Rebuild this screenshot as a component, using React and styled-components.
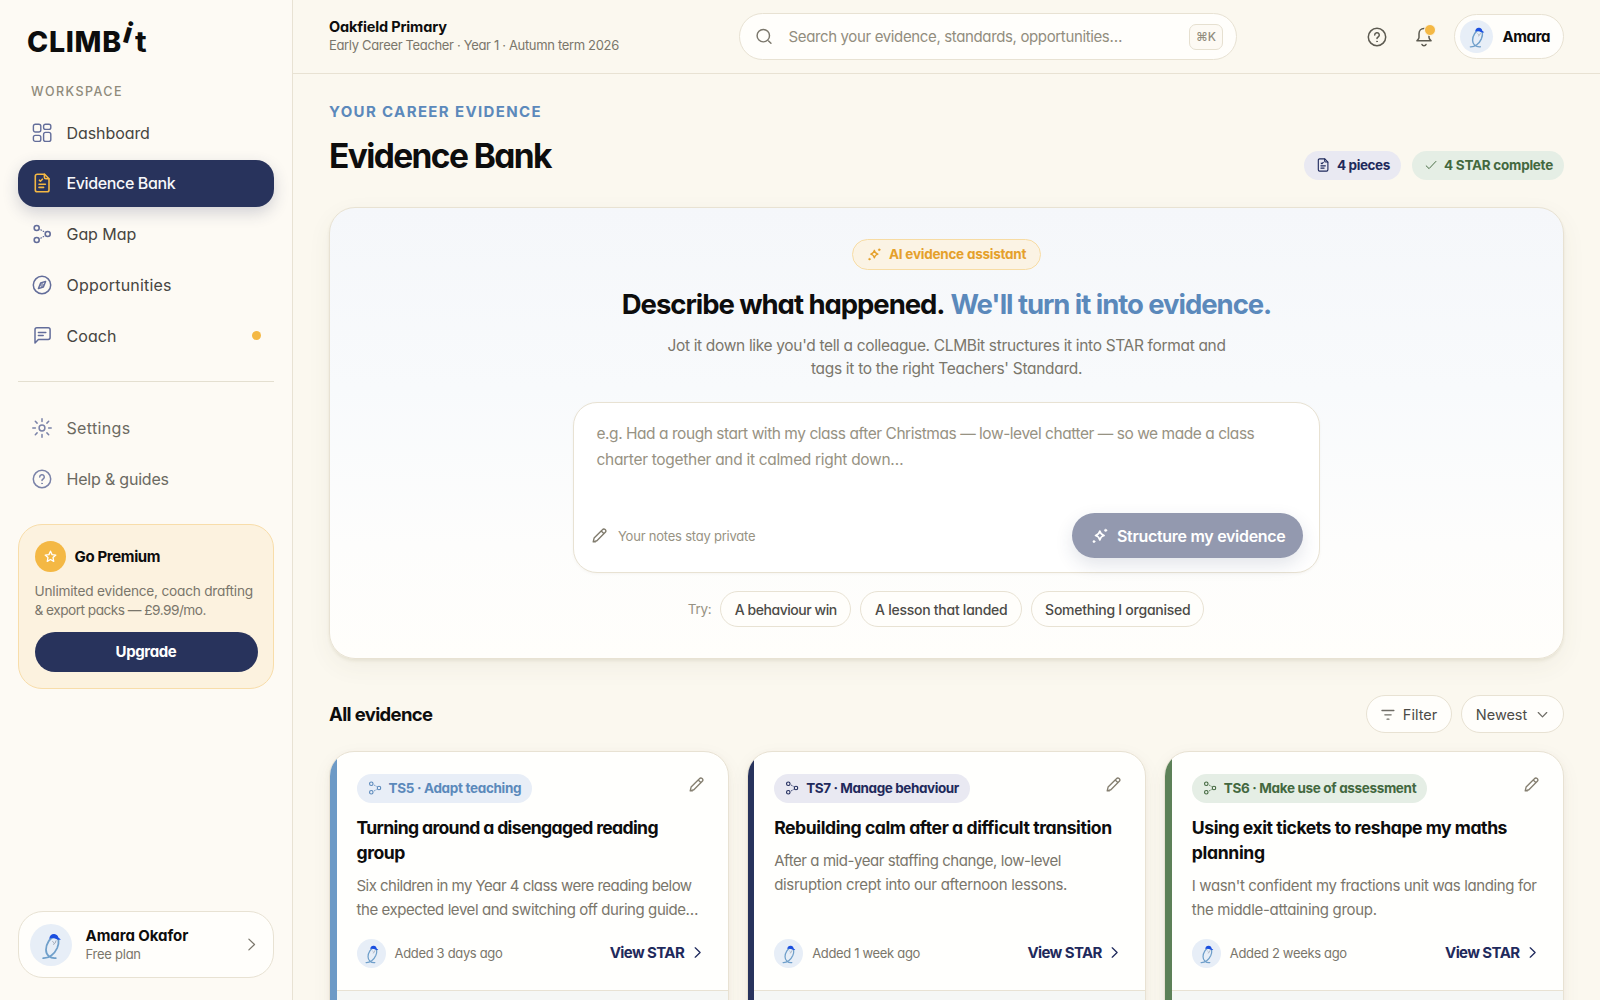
import React from "react";
import styled, { createGlobalStyle } from "styled-components";

const c = {
  navy: "#28335c",
  navyText: "#1f2a5c",
  blue: "#5b89bb",
  amber: "#f4b844",
  line: "#e8e2d3",
  ink: "#0d0d0d",
  body: "#7a766b",
  faint: "#979283",
  paper: "#fffefb",
};

const Global = createGlobalStyle`
  *, *::before, *::after { box-sizing: border-box; }
  body {
    margin: 0;
    background: #fbf8ef;
    color: ${c.ink};
    font-family: Inter, "Liberation Sans", sans-serif;
    font-feature-settings: "cv11";
    overflow: hidden;
  }
  button { font: inherit; color: inherit; border: 0; background: none; padding: 0; }
`;

/* Shared text primitive: size, weight, colour, tracking */
const Text = styled.span`
  display: ${(p) => (p.$block ? "block" : "inline-block")};
  white-space: pre;
  font-size: ${(p) => p.$size}px;
  font-weight: ${(p) => p.$w || 400};
  letter-spacing: ${(p) => p.$ls || 0}px;
  line-height: ${(p) => (p.$lh ? `${p.$lh}px` : "normal")};
  color: ${(p) => p.$color || "inherit"};
`;

/* ---------- icons ---------- */
const Icon = styled.svg`
  display: block;
  flex: none;
  fill: none;
  stroke: currentColor;
  stroke-linecap: round;
  stroke-linejoin: round;
`;
const Svg = ({ size = 20, sw = 1.4, children }) => (
  <Icon width={size} height={size} viewBox="0 0 20 20" strokeWidth={sw}>{children}</Icon>
);
const GridIcon = () => (
  <Svg sw={1.4}>
    <rect x="1.4" y="1.2" width="7.4" height="7.8" rx="2" />
    <rect x="11.6" y="1.2" width="7.2" height="5.2" rx="1.9" />
    <rect x="1.4" y="12.4" width="7.4" height="6" rx="1.9" />
    <rect x="11.6" y="9.4" width="7.2" height="9" rx="2" />
  </Svg>
);
const DocIcon = ({ size, sw = 1.6 }) => (
  <Svg size={size} sw={sw}>
    <path d="M12.6 1.2H5.2A1.9 1.9 0 0 0 3.3 3.1v13.8a1.9 1.9 0 0 0 1.9 1.9h9.9a1.9 1.9 0 0 0 1.9-1.9V5.8z" />
    <path d="M12.4 1.4v2.9a1.5 1.5 0 0 0 1.5 1.5h2.9" />
    <path d="M7.4 7.2l1 1 2-2M7 11.2h6.4M7 14.4h4.6" />
  </Svg>
);
const MapIcon = ({ size, sw = 1.6 }) => (
  <Svg size={size} sw={sw}>
    <circle cx="4.7" cy="4" r="2.5" />
    <circle cx="4.7" cy="16" r="2.5" />
    <circle cx="15.7" cy="10" r="2.5" />
    <path strokeWidth="1.2" strokeDasharray="0.6 2" d="M8.9 5.9l4 2.2M8.9 14.1l4-2.2" />
  </Svg>
);
const CompassIcon = () => (
  <Svg sw={1.5}>
    <circle cx="10" cy="10" r="8.7" />
    <path d="M13.6 6.4l-5 1.6-2.2 5.6 5-1.6z" strokeWidth="1.4" />
    <circle cx="10" cy="10" r="1.3" strokeWidth="1.1" />
  </Svg>
);
const ChatIcon = () => (
  <Svg sw={1.5}>
    <path d="M3 17V3.7A1.9 1.9 0 0 1 4.9 1.8h11.3a1.9 1.9 0 0 1 1.9 1.9v7.8a1.9 1.9 0 0 1-1.9 1.9H6.4z" />
    <path d="M6.4 6.4h7.4M6.4 9.4h4.8" />
  </Svg>
);
const GearIcon = () => (
  <Svg sw={1.5}>
    <circle cx="10" cy="10" r="2.9" />
    <path d="M10 .8v2.6M10 16.6v2.6M.8 10h2.6M16.6 10h2.6M3.3 3.3l1.8 1.8M14.9 14.9l1.8 1.8M16.7 3.3l-1.8 1.8M5.1 14.9l-1.8 1.8" />
  </Svg>
);
const HelpIcon = ({ size, sw = 1.5 }) => (
  <Svg size={size} sw={sw}>
    <circle cx="10" cy="10" r="8.7" />
    <path d="M7.7 8a2.3 2.3 0 1 1 3.4 2c-.8.4-1.1.8-1.1 1.6" />
    <circle cx="10" cy="14.4" r=".5" fill="currentColor" strokeWidth=".7" />
  </Svg>
);
const StarIcon = () => (
  <Svg size={13} sw={2}>
    <path d="M10 1.8l2.4 5.3 5.8.7-4.3 3.9 1.1 5.8-5-2.9-5 2.9 1.1-5.8L1.8 7.8l5.8-.7z" />
  </Svg>
);
const SparkIcon = ({ size = 16, sw = 1.8 }) => (
  <Svg size={size} sw={sw}>
    <path d="M9.8 4.4c.7 3 1.8 4.3 4.8 5-3 .7-4.1 2-4.8 5-.7-3-1.8-4.3-4.8-5 3-.7 4.1-2 4.8-5z" />
    <circle cx="16.3" cy="3.7" r="1.3" fill="currentColor" strokeWidth=".6" />
    <circle cx="3.3" cy="16.2" r="1.2" fill="currentColor" strokeWidth=".6" />
  </Svg>
);
const PencilIcon = () => (
  <Svg size={15} sw={1.8}>
    <path d="M1.6 18.4l1.2-5L13.9 2.3a2.5 2.5 0 0 1 3.8 3.5L6.5 17z M1.6 18.4h3M12.6 4.2l3.2 3.2" />
  </Svg>
);
const SearchIcon = () => (
  <Svg size={17} sw={1.7}>
    <circle cx="8.6" cy="9" r="7.3" />
    <path d="M14.8 15.2l2.8 2.8" />
  </Svg>
);
const BellIcon = () => (
  <Svg sw={1.5}>
    <path d="M10 1.6c-3 0-5 2.3-5 5.2v3.6c0 1.3-.9 2.1-2.1 3.3h14.2c-1.2-1.2-2.1-2-2.1-3.3V6.8c0-2.9-2-5.2-5-5.2z" />
    <path d="M8 17.4c.3.9 1 1.3 2 1.3s1.7-.4 2-1.3" />
  </Svg>
);
const CheckIcon = () => (
  <Svg size={12} sw={1.6}><path d="M2 11.5l4.8 4.5L18.2 4" /></Svg>
);
const Chevron = ({ down, size = 14, sw = 1.9 }) => (
  <Svg size={size} sw={sw}><path d={down ? "M3.5 7l6.5 6.6L16.5 7" : "M6.5 2.8L14 10l-7.5 7.2"} /></Svg>
);
const FilterIcon = () => (
  <Svg size={14} sw={1.9}><path d="M1.4 5h17M5.5 11.2h9M8.7 17.4h2.6" /></Svg>
);

const Disc = styled.span`
  display: grid;
  place-items: center;
  flex: none;
  width: ${(p) => p.$d}px;
  height: ${(p) => p.$d}px;
  border-radius: 50%;
  background: ${(p) => p.$bg || "#e7eef7"};
  color: #fff;
`;
const Avatar = ({ d }) => (
  <Disc $d={d}>
    <svg width={d} height={d} viewBox="0 0 42 42" fill="none" strokeLinecap="round">
      <path d="M13.2 34.2c5.6.3 11.4-4.2 14-10.2 2.3-6 1.9-10.600-2.200-11-5-.2-9 7.200-9 12.800 0 5.200 4 8.900 9.800 8.300" stroke="#6f9fca" strokeWidth="1.8" />
      <path d="M22.6 17.5l1 .9M26 16.8l-.8 2M23.4 20.3l1.2-.7" stroke="#8b96a5" strokeWidth=".8" />
      <path d="M19.3 14.7c.2-3.4 2.3-5 5-4.8 2.4.2 3.8 1.7 4 3.7l2.6 1.9c-2.2.6-3.7.2-5.2-.7-2-1-4.2-1-6.4-.1z" fill="#1b4fe0" />
    </svg>
  </Disc>
);

/* ---------- shell ---------- */
const Shell = styled.div`
  display: grid;
  grid-template-columns: 293px 1fr;
  width: 1600px;
  height: 1000px;
  overflow: hidden;
`;
const Sidebar = styled.aside`
  display: flex;
  flex-direction: column;
  height: 1000px;
  padding: 0 18px 22px;
  background: #fdfaf4;
  border-right: 1px solid ${c.line};
`;
const Logo = styled.div`
  display: flex;
  align-items: baseline;
  height: 83px;
  padding: 25px 0 0 9px;
  font-size: 28.5px;
  font-weight: 800;
  line-height: 34px;
  letter-spacing: 0.7px;
`;
const LogoTilt = styled.span`
  position: relative;
  top: -9px;
  margin: 0 2px 0 2px;
  transform: rotate(16deg);
`;
const LogoEnd = styled.span`
  display: inline-block;
  font-weight: 750;
  transform: scaleX(1.12);
  transform-origin: 0 50%;
`;
const GroupLabel = styled.div`
  flex: none;
  height: 26px;
  padding: 0 13px;
  display: flex;
`;
const Nav = styled.nav`
  display: flex;
  flex-direction: column;
  gap: 4px;
`;
const NavItem = styled.a`
  display: flex;
  align-items: center;
  gap: 14.5px;
  height: 47px;
  padding: 0 13px ${(p) => (p.$first ? 0 : 2)}px 14px;
  border-radius: 18px;
  color: ${(p) => (p.$on ? "#f7f7fa" : p.$soft ? "#6b6961" : "#464541")};
  background: ${(p) => (p.$on ? c.navy : "transparent")};
  box-shadow: ${(p) => (p.$on ? "0 6px 16px rgba(40,51,92,.2)" : "none")};
  & > svg { color: ${(p) => (p.$on ? c.amber : p.$soft ? "#7a82a8" : "#636d9a")}; }
`;
const Dot = styled.i`
  width: 9px;
  height: 9px;
  margin-left: auto;
  border-radius: 50%;
  background: ${c.amber};
`;
const Rule = styled.hr`
  width: 100%;
  height: 1px;
  border: 0;
  margin: 21px 0 22px;
  background: #e4dfd0;
`;
const Premium = styled.section`
  display: flex;
  flex-direction: column;
  height: 165px;
  margin-top: 22px;
  padding: 16px 15.5px;
  border: 1px solid #f8ddaa;
  border-radius: 24px;
  background: #fcf2df;
`;
const PremiumHead = styled.div`
  display: flex;
  align-items: center;
  gap: 9px;
  height: 31px;
  margin-bottom: 9.5px;
`;
const Upgrade = styled.button`
  height: 40px;
  margin-top: auto;
  padding-bottom: 2px;
  border-radius: 20px;
  background: ${c.navy};
  color: #fff;
`;
const UserCard = styled.section`
  display: flex;
  align-items: center;
  height: 67px;
  margin-top: auto;
  padding: 0 14px 0 11px;
  border: 1px solid ${c.line};
  border-radius: 25px;
  background: ${c.paper};
  & > svg { margin-left: auto; color: #7b776c; }
`;
const Names = styled.div`
  display: flex;
  flex-direction: column;
  margin-left: 13.5px;
`;

const Main = styled.main`
  display: flex;
  flex-direction: column;
  min-width: 0;
`;
const TopBar = styled.header`
  display: flex;
  flex: none;
  align-items: center;
  height: 74px;
  padding: 0 36px;
  border-bottom: 1px solid ${c.line};
`;
const School = styled.div`
  width: 410px;
  padding-bottom: 1px;
`;
const Search = styled.div`
  display: flex;
  align-items: center;
  gap: 15.5px;
  width: 498px;
  height: 47px;
  padding: 0 13px 0 16px;
  border: 1px solid ${c.line};
  border-radius: 24px;
  background: ${c.paper};
  color: #7b776c;
`;
const Key = styled.kbd`
  display: grid;
  place-items: center;
  width: 34px;
  height: 26px;
  margin-left: auto;
  border: 1px solid #e6e0d0;
  border-radius: 7px;
  background: #fdfaf4;
  font-family: inherit;
`;
const Actions = styled.div`
  display: flex;
  align-items: center;
  margin-left: auto;
  color: #5c5a50;
`;
const BellButton = styled.button`
  position: relative;
  margin: 0 20px 0 27px;
  color: #5c5a50;
`;
const Badge = styled.i`
  position: absolute;
  top: -3px;
  right: -1.5px;
  width: 12px;
  height: 12px;
  border: 1.5px solid #fbf8ef;
  border-radius: 50%;
  background: ${c.amber};
`;
const Profile = styled.div`
  display: flex;
  align-items: center;
  gap: 9.5px;
  width: 110px;
  height: 45px;
  padding-left: 5px;
  border: 1px solid ${c.line};
  border-radius: 23px;
  background: ${c.paper};
`;

const Page = styled.div`
  padding: 28px 36px 0;
`;
const PageHead = styled.div`
  display: flex;
  justify-content: space-between;
  align-items: flex-end;
  height: 78px;
`;
const Titles = styled.div`
  align-self: flex-start;
`;
const H1 = styled.h1`
  margin: 15px 0 0;
`;
const Tags = styled.div`
  display: flex;
  gap: 11px;
`;
const Tag = styled.span`
  display: inline-flex;
  align-items: center;
  gap: 7px;
  width: ${(p) => p.$width}px;
  height: 29px;
  padding: 0 0 1px ${(p) => p.$pl || 12}px;
  border-radius: 15px;
  color: ${(p) => p.$fg};
  background: ${(p) => p.$bg};
`;

const Hero = styled.section`
  display: flex;
  flex-direction: column;
  align-items: center;
  height: 452px;
  margin-top: 27px;
  padding-top: 31px;
  border: 1px solid ${c.line};
  border-radius: 26px;
  background: linear-gradient(180deg, #f5f7fa 0%, #f8fafc 40%, #fdfdfc 75%, #fffefb 100%);
  box-shadow: 0 2px 3px rgba(120,105,60,.1), 0 8px 24px rgba(90,80,50,.06);
`;
const AiBadge = styled.span`
  display: flex;
  align-items: center;
  gap: 7px;
  width: 189px;
  height: 31px;
  padding: 0 0 1px 14px;
  border: 1px solid #f7dca4;
  border-radius: 16px;
  background: #fbf3e4;
  color: #e5a02b;
`;
const H2 = styled.h2`
  display: flex;
  gap: 6px;
  margin: 16px 0 12px;
`;
const Lead = styled.div`
  display: flex;
  flex-direction: column;
  align-items: center;
`;
const Composer = styled.div`
  display: flex;
  flex-direction: column;
  justify-content: space-between;
  width: 747px;
  height: 171px;
  margin: 21px 0 18.5px;
  padding: 18px 16px 13.5px 18px;
  border: 1px solid ${c.line};
  border-radius: 24px;
  background: #fff;
  box-shadow: 0 1px 3px rgba(90,80,50,.05);
`;
const Prompt = styled.div`
  padding-left: 4.5px;
`;
const ComposerFoot = styled.div`
  display: flex;
  align-items: center;
  gap: 11px;
  color: #7f7a6c;
`;
const Primary = styled.button`
  display: flex;
  align-items: center;
  gap: 8.5px;
  width: 231px;
  height: 45px;
  margin-left: auto;
  padding-left: 18.5px;
  border-radius: 23px;
  background: #9399af;
  color: #fff;
  box-shadow: 0 7px 18px rgba(40,51,92,.13);
`;
const Chips = styled.div`
  display: flex;
  align-items: center;
  gap: 9px;
  padding-right: 1px;
`;
const Chip = styled.button`
  display: flex;
  align-items: center;
  justify-content: center;
  gap: ${(p) => p.$gap || 0}px;
  width: ${(p) => p.$width}px;
  height: ${(p) => p.$h}px;
  border: 1px solid ${c.line};
  border-radius: 20px;
  background: ${c.paper};
  color: #4c4b47;
  & > svg { color: #6f6d66; }
`;
const ListHead = styled.div`
  display: flex;
  align-items: center;
  gap: 9px;
  height: 38px;
  margin: 36px 0 18px;
  & > :first-child { margin-right: auto; }
`;
const Cards = styled.div`
  display: grid;
  grid-template-columns: repeat(3, 1fr);
  gap: 18px;
`;
const Card = styled.article`
  display: flex;
  height: 420px;
  overflow: hidden;
  border: 1px solid ${c.line};
  border-radius: 25px;
  background: #fffffd;
  box-shadow: 0 2px 6px rgba(90,80,50,.05), 0 6px 20px rgba(90,80,50,.05);
`;
const Stripe = styled.i`
  flex: none;
  width: 6.5px;
  background: ${(p) => p.$color};
`;
const CardCol = styled.div`
  display: flex;
  flex: 1;
  flex-direction: column;
  min-width: 0;
`;
const CardBody = styled.div`
  display: flex;
  flex: none;
  flex-direction: column;
  height: 238px;
  padding: 22px 24px 22.5px 20px;
`;
const CardTop = styled.div`
  display: flex;
  justify-content: space-between;
  align-items: flex-start;
  color: #857f70;
  & > svg { margin-top: 3px; }
`;
const CardTitle = styled.h3`
  margin: 11.5px 0 9px;
`;
const CardFoot = styled.div`
  display: flex;
  align-items: center;
  gap: 9px;
  margin-top: auto;
`;
const ViewLink = styled.a`
  display: flex;
  align-items: center;
  gap: 6.5px;
  margin-left: auto;
  padding: 0 0 1px;
  color: ${c.navyText};
`;
const CardExtra = styled.div`
  flex: 1;
  border-top: 1px solid ${c.line};
  background: #f5f7f5;
`;

const primaryNav = [
  { icon: <GridIcon />, label: "Dashboard", ls: -0.08, first: true },
  { icon: <DocIcon />, label: "Evidence Bank", ls: -0.37, on: true },
  { icon: <MapIcon />, label: "Gap Map", ls: -0.06 },
  { icon: <CompassIcon />, label: "Opportunities", ls: 0.2 },
  { icon: <ChatIcon />, label: "Coach", ls: 0.05, dot: true },
];
const secondaryNav = [
  { icon: <GearIcon />, label: "Settings", ls: 0.35 },
  { icon: <HelpIcon />, label: "Help & guides", ls: -0.2 },
];
const cards = [
  {
    stripe: "#6d9ac6", fg: c.blue, bg: "#e8eef7", tag: "TS5 · Adapt teaching", tagLs: -0.32, tagW: 175.5,
    title: [["Turning around a disengaged reading", -0.65], ["group", -0.45]],
    text: [["Six children in my Year 4 class were reading below", -0.525], ["the expected level and switching off during guide…", -0.43]],
    added: "Added 3 days ago",
  },
  {
    stripe: c.navy, fg: c.navyText, bg: "#e9e9f2", tag: "TS7 · Manage behaviour", tagLs: -0.41, tagW: 195.5,
    title: [["Rebuilding calm after a difficult transition", -0.43]],
    text: [["After a mid-year staffing change, low-level", -0.43], ["disruption crept into our afternoon lessons.", -0.3]],
    added: "Added 1 week ago",
  },
  {
    stripe: "#5d8158", fg: "#43683f", bg: "#e5eee5", tag: "TS6 · Make use of assessment", tagLs: -0.34, tagW: 235.5,
    title: [["Using exit tickets to reshape my maths", -0.46], ["planning", -0.35]],
    text: [["I wasn't confident my fractions unit was landing for", -0.38], ["the middle-attaining group.", -0.31]],
    added: "Added 2 weeks ago",
  },
];

const NavRow = ({ item, soft }) => (
  <NavItem $on={item.on} $soft={soft} $first={item.first || soft}>
    {item.icon}
    <Text $size={16} $w={item.on ? 480 : 440} $ls={item.ls}>{item.label}</Text>
    {item.dot && <Dot />}
  </NavItem>
);

export default function App() {
  return (
    <>
      <Global />
      <Shell>
        <Sidebar>
          <Logo>CLIMB<LogoTilt>i</LogoTilt><LogoEnd>t</LogoEnd></Logo>
          <GroupLabel><Text $size={12.5} $w={450} $ls={1.45} $lh={17} $color="#8f8a7b">WORKSPACE</Text></GroupLabel>
          <Nav>{primaryNav.map((n) => <NavRow key={n.label} item={n} />)}</Nav>
          <Rule />
          <Nav>{secondaryNav.map((n) => <NavRow key={n.label} item={n} soft />)}</Nav>
          <Premium>
            <PremiumHead>
              <Disc $d={31} $bg={c.amber}><StarIcon /></Disc>
              <Text $size={15} $w={670} $ls={-0.35}>Go Premium</Text>
            </PremiumHead>
            <Text $block $size={13.7} $w={380} $ls={-0.23} $lh={19} $color={c.body}>Unlimited evidence, coach drafting</Text>
            <Text $block $size={13.7} $w={380} $ls={-0.53} $lh={19} $color={c.body}>{"& export packs — £9.99/mo."}</Text>
            <Upgrade><Text $size={15} $w={650} $ls={-0.38}>Upgrade</Text></Upgrade>
          </Premium>
          <UserCard>
            <Avatar d={42} />
            <Names>
              <Text $size={15} $w={680} $ls={-0.05} $lh={18}>Amara Okafor</Text>
              <Text $size={13} $w={380} $ls={-0.25} $lh={18} $color={c.body}>Free plan</Text>
            </Names>
            <Chevron size={15} sw={1.7} />
          </UserCard>
        </Sidebar>

        <Main>
          <TopBar>
            <School>
              <Text $block $size={14.5} $w={660} $ls={-0.16} $lh={18}>Oakfield Primary</Text>
              <Text $block $size={13} $w={380} $ls={-0.336} $lh={18} $color={c.body}>Early Career Teacher · Year 1 · Autumn term 2026</Text>
            </School>
            <Search>
              <SearchIcon />
              <Text $size={15} $w={380} $ls={-0.36} $color="#928d7e">Search your evidence, standards, opportunities…</Text>
              <Key><Text $size={12} $w={450} $color="#928d7e">⌘K</Text></Key>
            </Search>
            <Actions>
              <HelpIcon />
              <BellButton><BellIcon /><Badge /></BellButton>
              <Profile>
                <Avatar d={33} />
                <Text $size={15} $w={680} $ls={-0.4} $color={c.ink}>Amara</Text>
              </Profile>
            </Actions>
          </TopBar>

          <Page>
            <PageHead>
              <Titles>
                <Text $block $size={15} $w={650} $ls={1.36} $lh={19} $color={c.blue}>YOUR CAREER EVIDENCE</Text>
                <H1><Text $block $size={33.5} $w={680} $ls={-1.6} $lh={40}>Evidence Bank</Text></H1>
              </Titles>
              <Tags>
                <Tag $width={97} $fg={c.navyText} $bg="#e9e9f2"><DocIcon size={14} sw={1.6} /><Text $size={13.5} $w={660} $ls={-0.4}>4 pieces</Text></Tag>
                <Tag $width={152} $pl={13} $fg="#43683f" $bg="#e5eee5"><CheckIcon /><Text $size={13.5} $w={660} $ls={-0.25}>4 STAR complete</Text></Tag>
              </Tags>
            </PageHead>

            <Hero>
              <AiBadge><SparkIcon size={15} /><Text $size={13.5} $w={650} $ls={-0.24}>AI evidence assistant</Text></AiBadge>
              <H2>
                <Text $size={27.5} $w={680} $ls={-1.05} $lh={36}>Describe what happened.</Text>
                <Text $size={27.5} $w={680} $ls={-1.05} $lh={36} $color={c.blue}>We'll turn it into evidence.</Text>
              </H2>
              <Lead>
                <Text $size={15.5} $w={380} $ls={-0.335} $lh={23.4} $color={c.body}>Jot it down like you'd tell a colleague. CLMBit structures it into STAR format and</Text>
                <Text $size={15.5} $w={380} $ls={-0.3} $lh={23.4} $color={c.body}>tags it to the right Teachers' Standard.</Text>
              </Lead>
              <Composer>
                <Prompt>
                  <Text $block $size={15.5} $w={380} $ls={-0.46} $lh={25.8} $color={c.faint}>e.g. Had a rough start with my class after Christmas — low-level chatter — so we made a class</Text>
                  <Text $block $size={15.5} $w={380} $ls={-0.31} $lh={25.8} $color={c.faint}>charter together and it calmed right down…</Text>
                </Prompt>
                <ComposerFoot>
                  <PencilIcon />
                  <Text $size={13} $w={390} $ls={-0.22} $color={c.faint}>Your notes stay private</Text>
                  <Primary><SparkIcon size={18} /><Text $size={16} $w={640} $ls={-0.3}>Structure my evidence</Text></Primary>
                </ComposerFoot>
              </Composer>
              <Chips>
                <Text $size={13.5} $w={380} $ls={-0.3} $color={c.faint}>Try:</Text>
                <Chip $width={131} $h={36}><Text $size={14} $w={490} $ls={-0.45}>A behaviour win</Text></Chip>
                <Chip $width={162} $h={36}><Text $size={14} $w={490} $ls={-0.26}>A lesson that landed</Text></Chip>
                <Chip $width={173} $h={36}><Text $size={14} $w={490} $ls={-0.25}>Something I organised</Text></Chip>
              </Chips>
            </Hero>

            <ListHead>
              <Text $size={18.5} $w={680} $ls={-0.64}>All evidence</Text>
              <Chip $width={86} $h={38} $gap={8}><FilterIcon /><Text $size={14.5} $w={440} $ls={0}>Filter</Text></Chip>
              <Chip $width={103} $h={38} $gap={9}><Text $size={14.5} $w={440} $ls={-0.05}>Newest</Text><Chevron down size={13} /></Chip>
            </ListHead>

            <Cards>
              {cards.map((k) => (
                <Card key={k.tag}>
                  <Stripe $color={k.stripe} />
                  <CardCol>
                    <CardBody>
                      <CardTop>
                        <Tag $width={k.tagW} $pl={11} $fg={k.fg} $bg={k.bg}><MapIcon size={14} sw={1.6} /><Text $size={13.5} $w={670} $ls={k.tagLs}>{k.tag}</Text></Tag>
                        <PencilIcon />
                      </CardTop>
                      <CardTitle>
                        {k.title.map(([t, ls]) => <Text key={t} $block $size={17.6} $w={660} $ls={ls} $lh={25}>{t}</Text>)}
                      </CardTitle>
                      {k.text.map(([t, ls]) => <Text key={t} $block $size={15} $w={380} $ls={ls} $lh={24.5} $color={c.body}>{t}</Text>)}
                      <CardFoot>
                        <Avatar d={29} />
                        <Text $size={13} $w={380} $ls={-0.33} $color={c.body}>{k.added}</Text>
                        <ViewLink><Text $size={15} $w={670} $ls={-0.6}>View STAR</Text><Chevron size={13} sw={2} /></ViewLink>
                      </CardFoot>
                    </CardBody>
                    <CardExtra />
                  </CardCol>
                </Card>
              ))}
            </Cards>
          </Page>
        </Main>
      </Shell>
    </>
  );
}
